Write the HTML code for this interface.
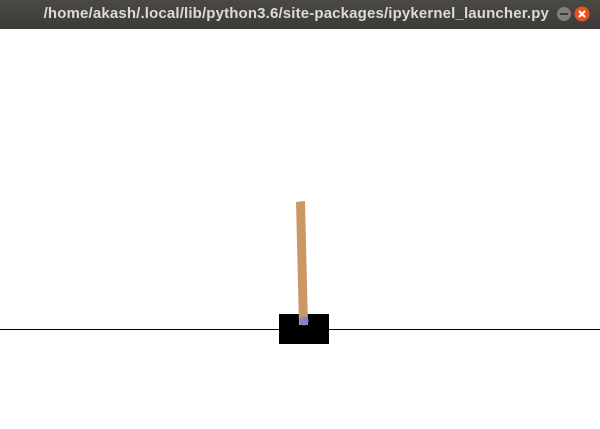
<!DOCTYPE html>
<html><head><style>
html,body{margin:0;padding:0;width:600px;height:429px;overflow:hidden;background:#fff}
.tb{position:absolute;left:0;top:0;width:600px;height:29px;background:linear-gradient(#4a4944,#3c3b37);}
.t{position:absolute;left:0;width:549px;text-align:right;top:5px;font:bold 15px "Liberation Sans",sans-serif;letter-spacing:0.15px;color:#dfdbd2;white-space:nowrap}
</style></head><body>
<div class="tb"><div class="t">/home/akash/.local/lib/python3.6/site-packages/ipykernel_launcher.py</div>
<svg style="position:absolute;left:0;top:0" width="600" height="29">
<circle cx="564" cy="14" r="7" fill="#7f7e79"/><rect x="560" y="13" width="8" height="2" fill="#3c3b37"/>
<circle cx="582" cy="14" r="7.5" fill="#e9541e"/><path d="M579 11l6 6M585 11l-6 6" stroke="#fff" stroke-width="2"/>
</svg></div>
<svg style="position:absolute;left:0;top:0" width="600" height="429">
<line x1="0" y1="329.5" x2="600" y2="329.5" stroke="#000" stroke-width="1"/>
<rect x="279" y="314" width="50" height="30" fill="#000"/>
<polygon points="296,202 305,201 308,325 299,325" fill="#ca9865"/>
<circle cx="304" cy="321" r="4.5" fill="#8184cb"/>
</svg>
</body></html>
